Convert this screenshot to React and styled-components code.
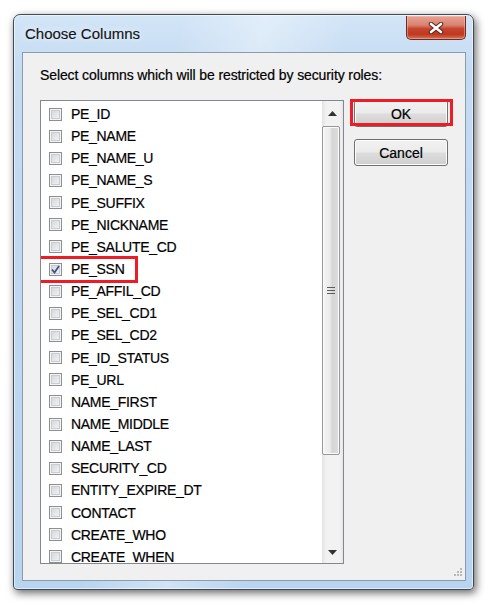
import React from 'react'
import styled, {createGlobalStyle} from 'styled-components'

const GlobalStyle = createGlobalStyle`
  html, body {
    margin: 0;
    padding: 0;
    background: #ffffff;
  }
  body {
    font-family: "Liberation Sans", Arial, sans-serif;
  }
`

const Page = styled.div`
  width: 488px;
  height: 606px;
  padding: 14px 0 0 13px;
  box-sizing: border-box;
`

const Window = styled.div`
  width: 461px;
  height: 576px;
  box-sizing: border-box;
  display: flex;
  flex-direction: column;
  padding: 0 7px 8px 8px;
  border: 1px solid #3f4957;
  border-radius: 7px 7px 4px 4px;
  background:
    linear-gradient(100deg, rgba(255,255,255,0) 30%, rgba(255,255,255,0.35) 45%, rgba(255,255,255,0) 60%),
    linear-gradient(180deg, #d3e5f7 0%, #c4dbf2 10%, #b9d4ef 100%);
  box-shadow: 2px 3px 9px rgba(0, 0, 0, 0.6), inset 0 0 0 1px rgba(255, 255, 255, 0.55);
`

const TitleBar = styled.div`
  height: 37px;
  display: flex;
  align-items: center;
  justify-content: space-between;
  flex-shrink: 0;
`

const Title = styled.span`
  padding-left: 3px;
  font-size: 15px;
  color: #141414;
  -webkit-text-stroke: 0.15px #141414;
  text-shadow: 0 0 6px rgba(255, 255, 255, 0.9);
`

const CloseButton = styled.div`
  align-self: flex-start;
  margin-top: 1px;
  width: 60px;
  height: 24px;
  box-sizing: border-box;
  display: flex;
  align-items: center;
  justify-content: center;
  border: 1px solid #6e2a22;
  border-top: none;
  border-radius: 0 0 5px 5px;
  background: linear-gradient(180deg, #e8a494 0%, #d88170 40%, #c6452f 55%, #c0381f 80%, #d2765c 100%);
  box-shadow: inset 0 0 0 1px rgba(255, 200, 190, 0.45);
`

const Client = styled.div`
  position: relative;
  flex: 1;
  box-sizing: border-box;
  padding: 14px 17px 0 17px;
  background: #f0f0f0;
  border: 1px solid #8c9cb0;
`

const Prompt = styled.div`
  font-size: 14px;
  letter-spacing: -0.1px;
  line-height: 16px;
  color: #000;
  -webkit-text-stroke: 0.2px #000;
`

const Body = styled.div`
  display: flex;
  margin-top: 17px;
`

const ListBox = styled.div`
  width: 304px;
  height: 464px;
  box-sizing: border-box;
  display: flex;
  border: 1px solid #828790;
  background: #ffffff;
`

const Items = styled.div`
  flex: 1;
  overflow: hidden;
  padding-top: 2px;
`

const Row = styled.div`
  position: relative;
  height: 22.15px;
  display: flex;
  align-items: center;
  gap: 9px;
  padding-left: 8px;
  font-size: 14px;
  letter-spacing: -0.3px;
  color: #000;
  -webkit-text-stroke: 0.2px #000;
  white-space: nowrap;

  ${p => p.$marked && `
    &::after {
      content: "";
      position: absolute;
      left: -4px;
      top: -2px;
      width: 101px;
      height: 27px;
      box-sizing: border-box;
      border: 3px solid #ee1c24;
    }
  `}
`

const Box = styled.span`
  width: 13px;
  height: 13px;
  box-sizing: border-box;
  flex-shrink: 0;
  display: flex;
  align-items: center;
  justify-content: center;
  border: 1px solid #8e8f8f;
  background: linear-gradient(135deg, #cfd2d6 0%, #e6e7e9 55%, #f7f7f7 100%);
  box-shadow: inset 0 0 0 1px #f4f4f4, inset 0 0 0 2px #c9ccd1;
`

const ScrollBar = styled.div`
  width: 21px;
  display: flex;
  flex-direction: column;
  background: linear-gradient(90deg, #e3e3e3 0%, #f2f2f2 20%, #f2f2f2 85%, #e6e6e6 100%);
`

const ArrowButton = styled.div`
  height: ${p => p.$h}px;
  display: flex;
  align-items: center;
  justify-content: center;
  flex-shrink: 0;
`

const Thumb = styled.div`
  height: 329px;
  margin: 1px 3px 0 0;
  box-sizing: border-box;
  display: flex;
  align-items: center;
  justify-content: center;
  border: 1px solid #979797;
  border-radius: 2px;
  background: linear-gradient(90deg, #f4f4f4 0%, #ececec 40%, #d6d6d6 60%, #dcdcdc 100%);
  box-shadow: inset 0 0 0 1px #fbfbfb;
`

const Track = styled.div`
  flex: 1;
`

const Buttons = styled.div`
  display: flex;
  flex-direction: column;
  gap: 12px;
  margin-left: 10px;
`

const Button = styled.div`
  position: relative;
  width: 94px;
  height: 27px;
  box-sizing: border-box;
  display: flex;
  align-items: center;
  justify-content: center;
  font-size: 14px;
  color: #000;
  -webkit-text-stroke: 0.2px #000;
  border: 1px solid #707070;
  border-radius: 3px;
  background: linear-gradient(180deg, #f2f2f2 0%, #ebebeb 48%, #dddddd 52%, #cfcfcf 100%);
  box-shadow: inset 0 0 0 1px #fcfcfc;

  ${p => p.$marked && `
    &::after {
      content: "";
      position: absolute;
      left: -5px;
      top: -2px;
      width: 103px;
      height: 27px;
      box-sizing: border-box;
      border: 3px solid #ee1c24;
    }
  `}
`

const Grip = styled.svg`
  position: absolute;
  right: 3px;
  bottom: 3px;
`

const columns = [
  'PE_ID', 'PE_NAME', 'PE_NAME_U', 'PE_NAME_S', 'PE_SUFFIX', 'PE_NICKNAME',
  'PE_SALUTE_CD', 'PE_SSN', 'PE_AFFIL_CD', 'PE_SEL_CD1', 'PE_SEL_CD2',
  'PE_ID_STATUS', 'PE_URL', 'NAME_FIRST', 'NAME_MIDDLE', 'NAME_LAST',
  'SECURITY_CD', 'ENTITY_EXPIRE_DT', 'CONTACT', 'CREATE_WHO', 'CREATE_WHEN',
]

const checked = new Set(['PE_SSN'])

const CloseGlyph = () => (
  <svg width="16" height="12" viewBox="0 0 16 12">
    <path d="M3 2 L13 10 M13 2 L3 10" stroke="#5a2018" strokeWidth="4.5" strokeLinecap="round" />
    <path d="M3 2 L13 10 M13 2 L3 10" stroke="#ffffff" strokeWidth="2.6" strokeLinecap="round" />
  </svg>
)

const Check = () => (
  <svg width="9" height="9" viewBox="0 0 9 9">
    <path d="M1 4.5 L3.5 7.5 L8 1" fill="none" stroke="#3c4f8a" strokeWidth="1.7" />
  </svg>
)

const Arrow = ({down}) => (
  <svg width="9" height="5" viewBox="0 0 9 5">
    <path d={down ? 'M0 0 H9 L4.5 5 Z' : 'M4.5 0 L9 5 H0 Z'} fill="#333" />
  </svg>
)

const GripLines = () => (
  <svg width="8" height="7" viewBox="0 0 8 7">
    {[0, 3, 6].map(y => (
      <rect key={y} x="0" y={y} width="8" height="1" fill="#5c5c5c" />
    ))}
  </svg>
)

const GripDots = () => (
  <Grip width="10" height="10" viewBox="0 0 10 10">
    {[[8, 0], [5, 3], [8, 3], [2, 6], [5, 6], [8, 6]].map(([x, y]) => (
      <rect key={`${x}-${y}`} x={x} y={y + 1} width="2" height="2" fill="#b8b8b8" />
    ))}
  </Grip>
)

const App = () => {
  return (
    <Page>
      <GlobalStyle />
      <Window>
        <TitleBar>
          <Title>Choose Columns</Title>
          <CloseButton><CloseGlyph /></CloseButton>
        </TitleBar>
        <Client>
          <Prompt>Select columns which will be restricted by security roles:</Prompt>
          <Body>
            <ListBox>
              <Items>
                {columns.map(name => (
                  <Row key={name} $marked={checked.has(name)}>
                    <Box>{checked.has(name) && <Check />}</Box>
                    {name}
                  </Row>
                ))}
              </Items>
              <ScrollBar>
                <ArrowButton $h={24}><Arrow /></ArrowButton>
                <Thumb><GripLines /></Thumb>
                <Track />
                <ArrowButton $h={22}><Arrow down /></ArrowButton>
              </ScrollBar>
            </ListBox>
            <Buttons>
              <Button $marked>OK</Button>
              <Button>Cancel</Button>
            </Buttons>
          </Body>
          <GripDots />
        </Client>
      </Window>
    </Page>
  )
}

export default App
